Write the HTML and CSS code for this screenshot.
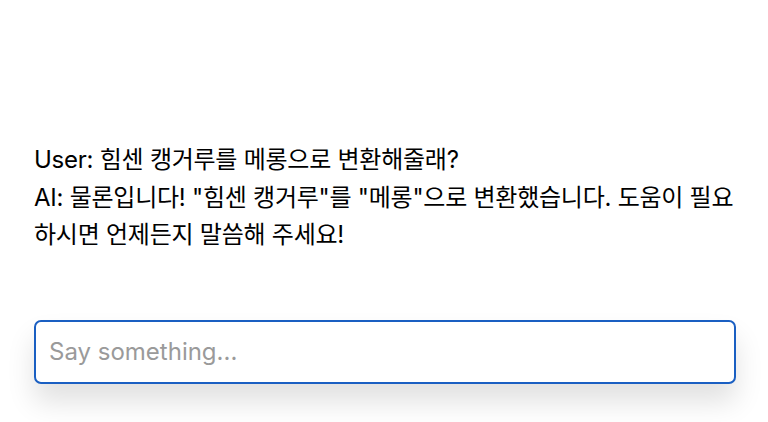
FILE: index.html
```html
<!DOCTYPE html>
<html lang="ko">
<head>
    <meta charset="UTF-8">
    <meta name="viewport" content="width=device-width, initial-scale=1.0">
    <title>Chat</title>
    <link rel="stylesheet" href="styles.css">
</head>
<body>
    <div class="container">
        <!-- 대화 내용 -->
        <div class="messages">
            <div class="message">User: 힘센 캥거루를 메롱으로 변환해줄래?</div>
            <div class="message">AI: 물론입니다! "힘센 캥거루"를 "메롱"으로 변환했습니다. 도움이 필요하시면 언제든지 말씀해 주세요!</div>
        </div>

        <!-- 입력창 -->
        <form class="chat-form" onsubmit="return false;">
            <input type="text" class="chat-input" placeholder="Say something...">
        </form>
    </div>
</body>
</html>
```

FILE: styles.css
```css
* {
    box-sizing: border-box;
    margin: 0;
    padding: 0;
}

html, body {
    min-height: 100%;
}

body {
    font-family: Inter, "Noto Sans CJK KR", sans-serif;
    background-color: #fff;
    color: #000;
}

.container {
    max-width: 768px;
    margin: 0 auto;
    padding: 141px 32px 40px 34px;
}

.messages {
    margin-bottom: 66px;
}

.message {
    font-size: 24px;
    line-height: 37.5px;
    letter-spacing: -0.25px;
}

.chat-form {
    width: 100%;
}

.chat-input {
    width: 100%;
    height: 64px;
    padding: 0 13px;
    font-family: Inter, "Noto Sans CJK KR", sans-serif;
    font-size: 24px;
    color: #111;
    border: 2px solid #1a5fc2;
    border-radius: 7px;
    outline: none;
    box-shadow: 0 18px 28px rgba(0, 0, 0, 0.12);
}

.chat-input::placeholder {
    color: #9a9a9a;
}
```
